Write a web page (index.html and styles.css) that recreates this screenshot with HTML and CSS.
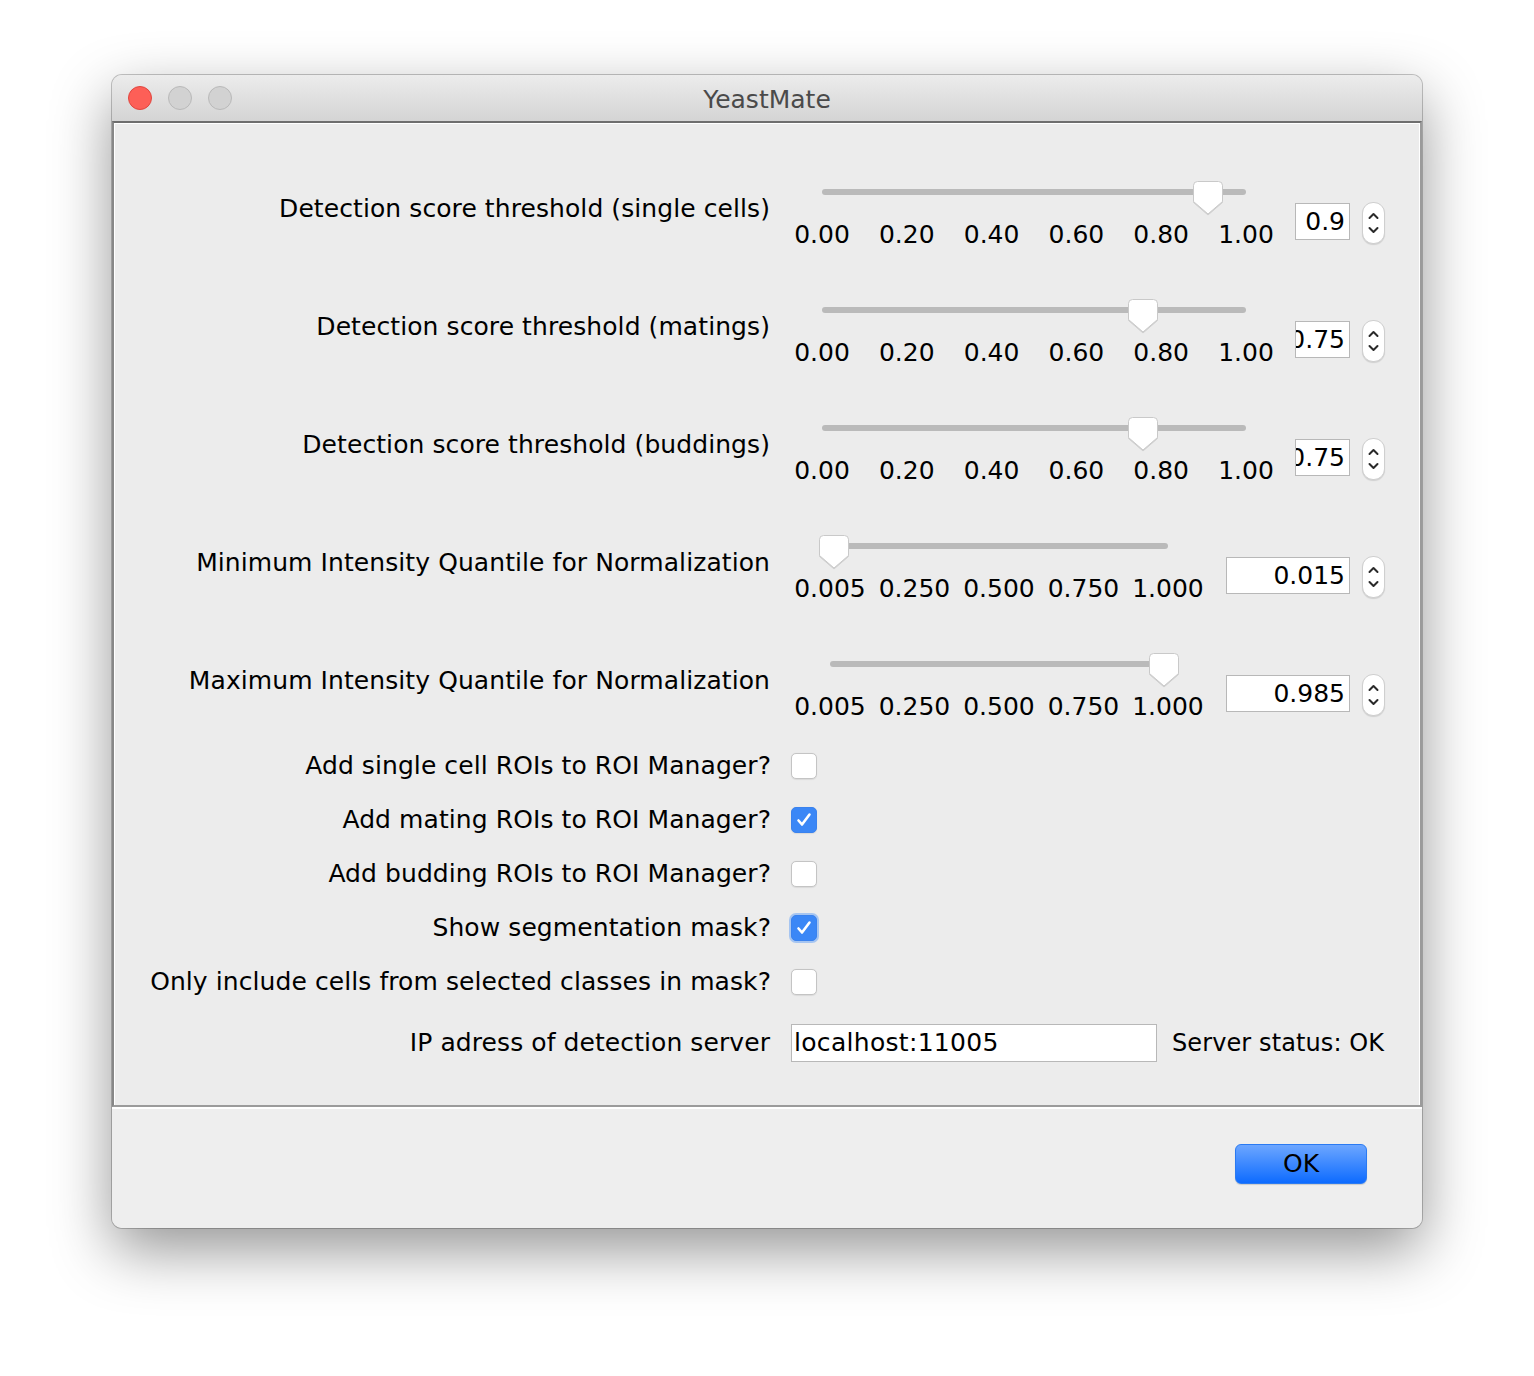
FILE: index.html
```html
<!DOCTYPE html>
<html>
<head>
<meta charset="utf-8">
<link rel="stylesheet" href="styles.css">
</head>
<body>
<div class="window">
  <div class="titlebar">
    <div class="lights">
      <span class="light red"></span>
      <span class="light gray"></span>
      <span class="light gray"></span>
    </div>
    <div class="title">YeastMate</div>
  </div>
  <div class="panel">
    <div class="srow">
      <div class="label">Detection score threshold (single cells)</div>
      <div class="slider s2">
        <div class="track"></div>
        <svg class="thumb" style="left:412px" width="32" height="36" viewBox="0 0 32 36"><path d="M5.5 1.5H26.5Q30.5 1.5 30.5 5.5V21.5L16 34L1.5 21.5V5.5Q1.5 1.5 5.5 1.5Z" fill="#fff" stroke="#c9c9c9" stroke-width="1"/></svg>
        <div class="ticks"><span>0.00</span><span>0.20</span><span>0.40</span><span>0.60</span><span>0.80</span><span>1.00</span></div>
      </div>
      <div class="field short"><span>0.9</span></div>
      <div class="stepper"><svg width="23" height="42" viewBox="0 0 23 42"><path d="M7.5 16L11.5 12L15.5 16M7.5 26L11.5 30L15.5 26" fill="none" stroke="#2a2a2a" stroke-width="2" stroke-linecap="round" stroke-linejoin="round"/></svg></div>
    </div>
    <div class="srow">
      <div class="label">Detection score threshold (matings)</div>
      <div class="slider s2">
        <div class="track"></div>
        <svg class="thumb" style="left:347px" width="32" height="36" viewBox="0 0 32 36"><path d="M5.5 1.5H26.5Q30.5 1.5 30.5 5.5V21.5L16 34L1.5 21.5V5.5Q1.5 1.5 5.5 1.5Z" fill="#fff" stroke="#c9c9c9" stroke-width="1"/></svg>
        <div class="ticks"><span>0.00</span><span>0.20</span><span>0.40</span><span>0.60</span><span>0.80</span><span>1.00</span></div>
      </div>
      <div class="field short"><span>0.75</span></div>
      <div class="stepper"><svg width="23" height="42" viewBox="0 0 23 42"><path d="M7.5 16L11.5 12L15.5 16M7.5 26L11.5 30L15.5 26" fill="none" stroke="#2a2a2a" stroke-width="2" stroke-linecap="round" stroke-linejoin="round"/></svg></div>
    </div>
    <div class="srow">
      <div class="label">Detection score threshold (buddings)</div>
      <div class="slider s2">
        <div class="track"></div>
        <svg class="thumb" style="left:347px" width="32" height="36" viewBox="0 0 32 36"><path d="M5.5 1.5H26.5Q30.5 1.5 30.5 5.5V21.5L16 34L1.5 21.5V5.5Q1.5 1.5 5.5 1.5Z" fill="#fff" stroke="#c9c9c9" stroke-width="1"/></svg>
        <div class="ticks"><span>0.00</span><span>0.20</span><span>0.40</span><span>0.60</span><span>0.80</span><span>1.00</span></div>
      </div>
      <div class="field short"><span>0.75</span></div>
      <div class="stepper"><svg width="23" height="42" viewBox="0 0 23 42"><path d="M7.5 16L11.5 12L15.5 16M7.5 26L11.5 30L15.5 26" fill="none" stroke="#2a2a2a" stroke-width="2" stroke-linecap="round" stroke-linejoin="round"/></svg></div>
    </div>
    <div class="srow">
      <div class="label">Minimum Intensity Quantile for Normalization</div>
      <div class="slider s3">
        <div class="track"></div>
        <svg class="thumb" style="left:30.6px" width="32" height="36" viewBox="0 0 32 36"><path d="M5.5 1.5H26.5Q30.5 1.5 30.5 5.5V21.5L16 34L1.5 21.5V5.5Q1.5 1.5 5.5 1.5Z" fill="#fff" stroke="#c9c9c9" stroke-width="1"/></svg>
        <div class="ticks"><span>0.005</span><span>0.250</span><span>0.500</span><span>0.750</span><span>1.000</span></div>
      </div>
      <div class="field long"><span>0.015</span></div>
      <div class="stepper"><svg width="23" height="42" viewBox="0 0 23 42"><path d="M7.5 16L11.5 12L15.5 16M7.5 26L11.5 30L15.5 26" fill="none" stroke="#2a2a2a" stroke-width="2" stroke-linecap="round" stroke-linejoin="round"/></svg></div>
    </div>
    <div class="srow last">
      <div class="label">Maximum Intensity Quantile for Normalization</div>
      <div class="slider s3">
        <div class="track"></div>
        <svg class="thumb" style="left:360.2px" width="32" height="36" viewBox="0 0 32 36"><path d="M5.5 1.5H26.5Q30.5 1.5 30.5 5.5V21.5L16 34L1.5 21.5V5.5Q1.5 1.5 5.5 1.5Z" fill="#fff" stroke="#c9c9c9" stroke-width="1"/></svg>
        <div class="ticks"><span>0.005</span><span>0.250</span><span>0.500</span><span>0.750</span><span>1.000</span></div>
      </div>
      <div class="field long"><span>0.985</span></div>
      <div class="stepper"><svg width="23" height="42" viewBox="0 0 23 42"><path d="M7.5 16L11.5 12L15.5 16M7.5 26L11.5 30L15.5 26" fill="none" stroke="#2a2a2a" stroke-width="2" stroke-linecap="round" stroke-linejoin="round"/></svg></div>
    </div>

    <div class="crow">
      <div class="label">Add single cell ROIs to ROI Manager?</div>
      <div class="check"></div>
    </div>
    <div class="crow">
      <div class="label">Add mating ROIs to ROI Manager?</div>
      <div class="check on"><svg width="26" height="26" viewBox="0 0 26 26"><path d="M7.5 13.5L11 17.5L18.5 7.5" fill="none" stroke="#fff" stroke-width="2.6" stroke-linecap="round" stroke-linejoin="round"/></svg></div>
    </div>
    <div class="crow">
      <div class="label">Add budding ROIs to ROI Manager?</div>
      <div class="check"></div>
    </div>
    <div class="crow">
      <div class="label">Show segmentation mask?</div>
      <div class="check on focus"><svg width="26" height="26" viewBox="0 0 26 26"><path d="M7.5 13.5L11 17.5L18.5 7.5" fill="none" stroke="#fff" stroke-width="2.6" stroke-linecap="round" stroke-linejoin="round"/></svg></div>
    </div>
    <div class="crow">
      <div class="label">Only include cells from selected classes in mask?</div>
      <div class="check"></div>
    </div>
    <div class="iprow">
      <div class="label">IP adress of detection server</div>
      <div class="ipfield">localhost:11005</div>
      <div class="status">Server status: OK</div>
    </div>
  </div>
  <div class="footer">
    <button class="ok">OK</button>
  </div>
</div>
</body>
</html>
```

FILE: styles.css
```css
* { box-sizing: border-box; }
html, body { margin: 0; padding: 0; background: #ffffff; }
body {
  font-family: "DejaVu Sans", "Liberation Sans", sans-serif;
  color: #000;
  width: 1534px;
  height: 1376px;
  overflow: hidden;
}
.window {
  margin: 75px 0 0 112px;
  width: 1310px;
  height: 1153px;
  border-radius: 10px;
  background: #eeeeee;
  box-shadow: 0 0 0 1px rgba(0,0,0,0.22), 0 22px 60px rgba(0,0,0,0.42);
  display: flex;
  flex-direction: column;
  overflow: hidden;
}
.titlebar {
  height: 46px;
  flex: none;
  position: relative;
  background: linear-gradient(#ececec, #d4d4d4);
  display: flex;
  align-items: center;
  justify-content: center;
}
.lights {
  position: absolute;
  left: 16px;
  top: 11px;
  display: flex;
  gap: 16px;
}
.light {
  width: 24px;
  height: 24px;
  border-radius: 50%;
  display: block;
}
.light.red { background: #fd5f57; border: 1px solid #e0463f; }
.light.gray { background: #d2d2d2; border: 1px solid #b9b9b9; }
.title {
  font-size: 25px;
  color: #4a4a4a;
  margin-top: 2px;
}
.panel {
  flex: none;
  height: 986px;
  background: #ececec;
  border-top: 2px solid #6e6e6e;
  border-left: 2px solid #878787;
  border-right: 2px solid #9b9b9b;
  border-bottom: 2px solid #9b9b9b;
  box-shadow: inset 1px 1px 0 #ffffff, inset -1px 0 0 #ffffff;
  padding-top: 57px;
  display: flex;
  flex-direction: column;
}
.label {
  width: 656px;
  flex: none;
  text-align: right;
  font-size: 25px;
  letter-spacing: 0.08px;
  line-height: 30px;
  white-space: nowrap;
}
.srow {
  height: 118px;
  display: flex;
  padding-right: 35px;
}
.srow.last { height: 87px; }
.srow .label { padding-top: 14px; }
.slider {
  position: relative;
  flex: none;
}
.slider.s2 { margin-left: 9.6px; width: 509px; }
.slider.s3 { margin-left: 17.75px; width: 422.5px; }
.track {
  margin-top: 9px;
  height: 6px;
  border-radius: 3px;
  background: #bababa;
}
.s2 .track { margin-left: 42.4px; width: 424px; }
.s3 .track { margin-left: 42.25px; width: 338px; }
.thumb {
  position: absolute;
  top: 0;
  filter: drop-shadow(0 1px 0.5px rgba(0,0,0,0.12));
}
.ticks {
  margin-top: 25px;
  display: flex;
  font-size: 25px;
  line-height: 30px;
}
.s2 .ticks span { width: 84.8px; text-align: center; flex: none; }
.s3 .ticks span { width: 84.5px; text-align: center; flex: none; }
.field {
  margin-top: 23px;
  margin-left: auto;
  height: 37px;
  background: #fff;
  border: 1px solid #b8b8b8;
  display: flex;
  justify-content: flex-end;
  align-items: center;
  overflow: hidden;
  white-space: nowrap;
  font-size: 25px;
  padding-right: 4px;
}
.field span { flex: none; }
.field.short { width: 55px; }
.field.long { width: 124px; }
.stepper {
  margin-top: 22px;
  margin-left: 12px;
  width: 23px;
  height: 42px;
  flex: none;
  border-radius: 11px;
  background: #fff;
  border: 1px solid #cfcfcf;
  box-shadow: 0 1px 1px rgba(0,0,0,0.12);
  display: flex;
  align-items: center;
  justify-content: center;
}
.stepper svg { display: block; flex: none; }
.crow {
  height: 54px;
  display: flex;
  align-items: center;
}
.crow .label { width: 657px; }
.check {
  margin-left: 20px;
  width: 26px;
  height: 26px;
  border-radius: 5px;
  background: #fff;
  border: 1px solid #c4c4c4;
  box-shadow: 0 0.5px 1px rgba(0,0,0,0.08);
}
.check.on {
  background: #3b87f6;
  border: 1px solid #3a82ee;
}
.check.focus {
  box-shadow: 0 0 0 2px rgba(110, 165, 245, 0.55);
}
.check svg { display: block; margin: -1px; }
.iprow {
  height: 68px;
  display: flex;
  align-items: center;
}
.ipfield {
  margin-left: 21px;
  width: 366px;
  height: 38px;
  background: #fff;
  border: 1px solid #b8b8b8;
  font-size: 25px;
  letter-spacing: 0.3px;
  line-height: 36px;
  padding-left: 2px;
}
.status {
  margin-left: 15px;
  font-size: 24px;
  letter-spacing: 0.1px;
}
.footer {
  flex: 1;
  background: #eeeeee;
  border-top: 2px solid #ffffff;
  display: flex;
  justify-content: flex-end;
  align-items: flex-start;
  padding: 35px 55px 0 0;
}
.ok {
  width: 132px;
  height: 40px;
  border-radius: 6px;
  border: 1px solid #2a7af2;
  background: linear-gradient(#6ca6ff, #0d6bff);
  font-family: "DejaVu Sans", sans-serif;
  font-size: 25px;
  line-height: 36px;
  color: #000;
  padding: 0;
  box-shadow: 0 1px 1px rgba(0,0,0,0.15);
}
```
